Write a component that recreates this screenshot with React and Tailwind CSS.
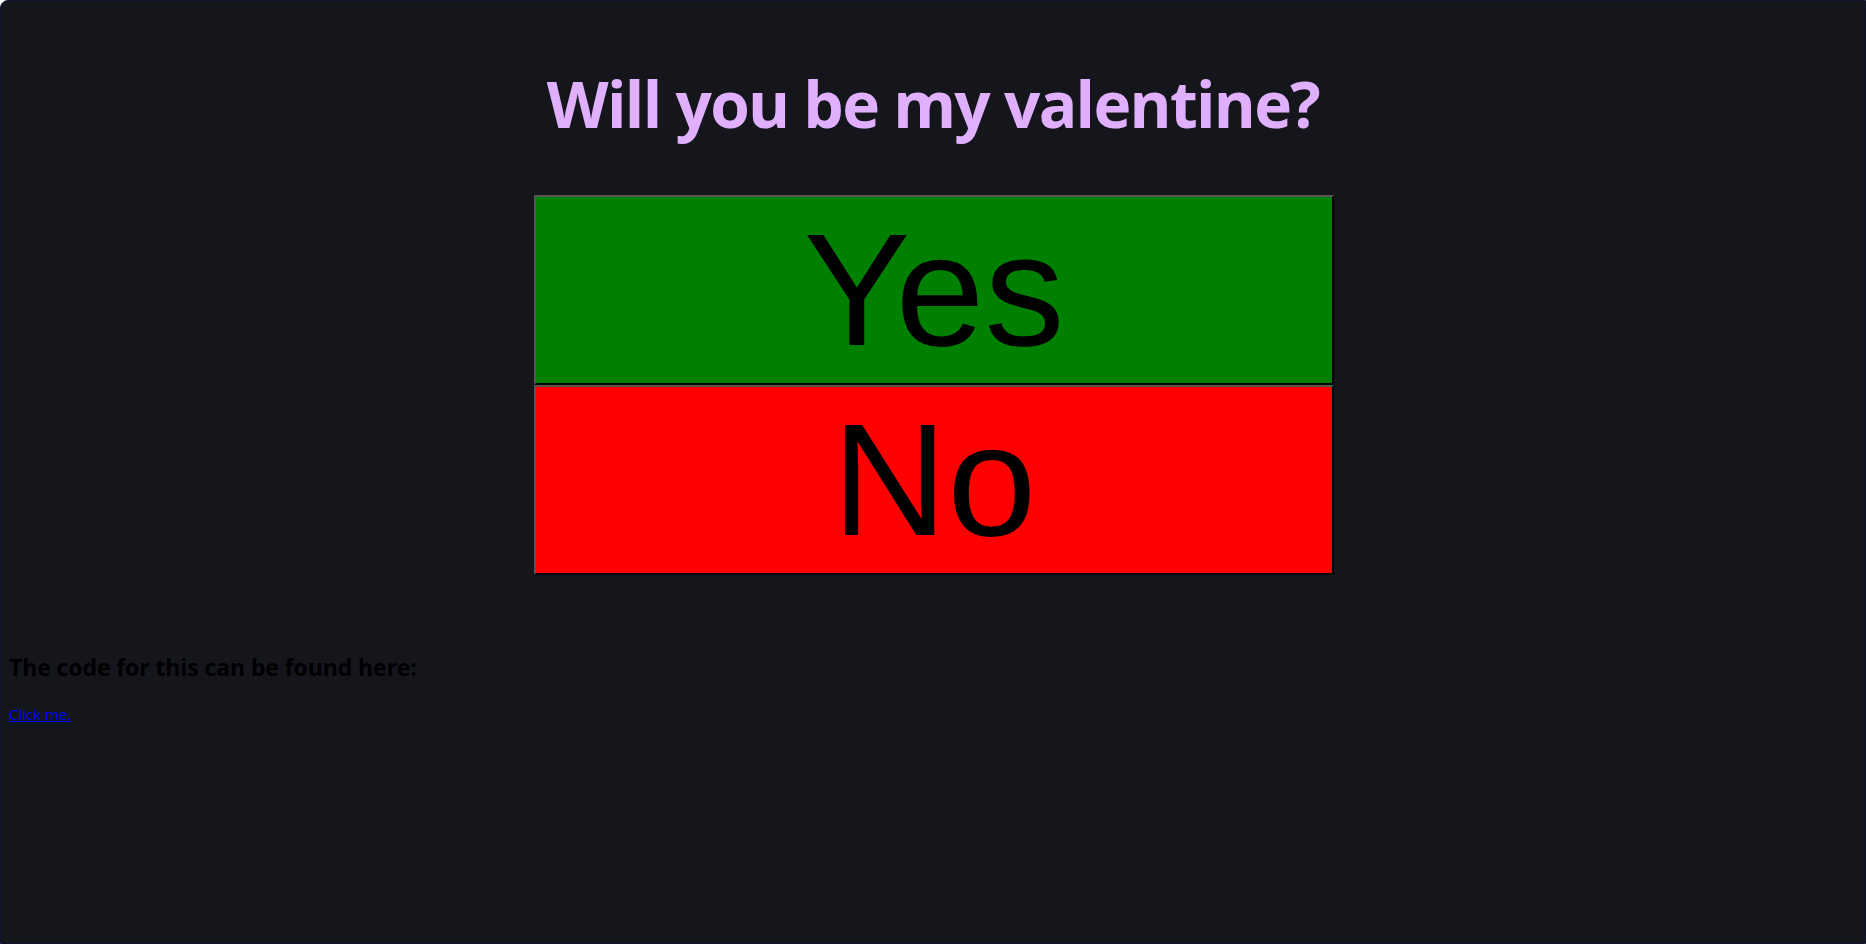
export default function App() {
  return (
    <div className="min-h-[944px] bg-[#15161c] border border-[#0e1230] rounded-tl-lg px-2 overflow-hidden" style={{ fontFamily: '"Open Sans", sans-serif' }}>
      <h1 className="text-center text-[64px] leading-[87px] font-bold text-[#e0b0ff] mt-[59px] m-0 tracking-[-1.7px]">
        Will you be my valentine?
      </h1>
      <div className="flex flex-col items-center mt-[48px] pl-[2px]">
        <button
          className="w-[800px] h-[190px] bg-[#008000] text-black text-[160px] leading-none border-2 border-t-[#555555] border-l-[#555555] border-b-black border-r-black flex items-center justify-center"
          style={{ fontFamily: '"Liberation Sans", Arial, sans-serif' }}
        >
          Yes
        </button>
        <button
          className="w-[800px] h-[190px] bg-[#ff0000] text-black text-[160px] leading-none border-2 border-t-[#555555] border-l-[#555555] border-b-black border-r-black flex items-center justify-center"
          style={{ fontFamily: '"Liberation Sans", Arial, sans-serif' }}
        >
          No
        </button>
      </div>
      <h3 className="text-[23px] leading-[30px] font-bold text-black mt-[77px] tracking-[-0.1px]">
        The code for this can be found here:
      </h3>
      <a href="#" className="block mt-[22px] text-[15px] leading-[20px] text-[#0000ff] underline w-fit">
        Click me.
      </a>
    </div>
  );
}
